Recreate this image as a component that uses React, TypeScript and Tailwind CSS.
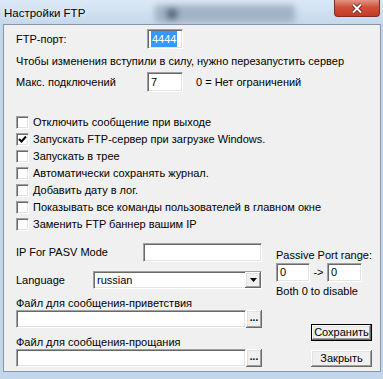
import React from "react"

const font = "font-['Tahoma','Liberation_Sans','DejaVu_Sans',sans-serif]"
const sunken =
  "bg-white border border-t-[#a0a0a0] border-l-[#a0a0a0] border-b-[#ffffff] border-r-[#ffffff] shadow-[inset_1px_1px_0_#696969,inset_-1px_-1px_0_#e3e3e3]"
const raised =
  "bg-[#f0f0f0] shadow-[inset_-1px_-1px_0_#696969,inset_1px_1px_0_#ffffff,inset_-2px_-2px_0_#a0a0a0,inset_2px_2px_0_#e3e3e3]"

function TextBox({ className, children }: { className: string; children?: React.ReactNode }) {
  return <div className={`${sunken} ${className} flex items-center pl-[3px] text-[11px]`}>{children}</div>
}

function Check({ checked, label }: { checked?: boolean; label: string }) {
  return (
    <div className="h-[17px] flex items-center">
      <div className={`${sunken} w-[13px] h-[13px] flex items-center justify-center`}>
        {checked && (
          <svg width="9" height="9" viewBox="0 0 9 9">
            <path d="M1 4 L3.5 6.5 L8 1.5" stroke="#000" strokeWidth="2" fill="none" />
          </svg>
        )}
      </div>
      <span className="ml-[4px] text-[11px]">{label}</span>
    </div>
  )
}

function DotsButton() {
  return (
    <div className={`${raised} w-[16px] h-[18px] flex items-center justify-center text-[10px] font-bold leading-none pb-[3px]`}>
      ...
    </div>
  )
}

export default function App() {
  return (
    <div className={`w-[383px] h-[379px] bg-[#c3d6eb] flex flex-col text-black ${font}`}>
      {/* title bar */}
      <div className="h-[24px] flex items-start bg-[linear-gradient(180deg,#dce8f5,#c6d8ec)] overflow-hidden">
        <span className="pl-[4px] pt-[5px] text-[11.5px] text-black [text-shadow:0_0_6px_#ffffff] font-['Liberation_Sans',sans-serif]">
          Настройки FTP
        </span>
        <div className="flex-1 flex pt-[5px] pl-[70px]">
          <div className="w-[140px] h-[18px] rounded-[3px] bg-[#a3b3c6] blur-[3px] flex items-center pl-[12px]">
            <div className="w-[10px] h-[10px] bg-[#56667a]" />
          </div>
        </div>
        <div className="w-[46px] h-[17px] mr-[3px] rounded-b-[4px] border border-t-0 border-[#7d2e24] bg-[linear-gradient(180deg,#e39484,#d0503a_45%,#c43a22)] flex items-center justify-center">
          <svg width="12" height="11" viewBox="0 0 12 11">
            <path d="M2 1.5 L10 9.5 M10 1.5 L2 9.5" stroke="#5a1a12" strokeWidth="3.6" />
            <path d="M2 1.5 L10 9.5 M10 1.5 L2 9.5" stroke="#ffffff" strokeWidth="2" />
          </svg>
        </div>
      </div>

      {/* client area */}
      <div className="ml-[3px] w-[378px] h-[348px] border border-[#8596ab] bg-[#f0f0f0] flex flex-col pl-[12px] text-[11px]">
        <div className="mt-[4px] h-[20px] flex items-center">
          <span className="w-[131px]">FTP-порт:</span>
          <TextBox className="w-[36px] h-[20px]">
            <span className="bg-[#3399ff] text-white px-px">4444</span>
          </TextBox>
        </div>
        <div className="mt-[4px] h-[16px] flex items-center">
          Чтобы изменения вступили в силу, нужно перезапустить сервер
        </div>
        <div className="mt-[3px] h-[20px] flex items-center">
          <span className="w-[131px]">Макс. подключений</span>
          <TextBox className="w-[36px] h-[20px]">7</TextBox>
          <span className="ml-[13px]">0 = Нет ограничений</span>
        </div>

        <div className="mt-[22px] flex flex-col">
          <Check label="Отключить сообщение при выходе" />
          <Check checked label="Запускать FTP-сервер при загрузке Windows." />
          <Check label="Запускать в трее" />
          <Check label="Автоматически сохранять журнал." />
          <Check label="Добавить дату в лог." />
          <Check label="Показывать все команды пользователей в главном окне" />
          <Check label="Заменить FTP баннер вашим IP" />
        </div>

        <div className="mt-[10px] flex">
          {/* left column */}
          <div className="w-[246px] flex flex-col">
            <div className="h-[19px] flex items-center justify-between">
              <span>IP For PASV Mode</span>
              <TextBox className="w-[119px] h-[19px]" />
            </div>
            <div className="mt-[9px] h-[18px] flex items-center">
              <span className="w-[77px]">Language</span>
              <div className={`${sunken} w-[169px] h-[18px] flex items-center`}>
                <span className="flex-1 pl-[3px]">russian</span>
                <div className={`${raised} w-[16px] h-[16px] flex items-center justify-center`}>
                  <svg width="7" height="4" viewBox="0 0 7 4">
                    <path d="M0 0 H7 L3.5 4 Z" fill="#000" />
                  </svg>
                </div>
              </div>
            </div>
            <div className="mt-[7px] h-[14px] flex items-center">Файл для сообщения-приветствия</div>
            <div className="h-[18px] flex">
              <TextBox className="w-[230px] h-[18px]" />
              <DotsButton />
            </div>
            <div className="mt-[7px] h-[14px] flex items-center">Файл для сообщения-прощания</div>
            <div className="h-[18px] flex">
              <TextBox className="w-[230px] h-[18px]" />
              <DotsButton />
            </div>
          </div>

          {/* right column */}
          <div className="ml-[14px] w-[97px] flex flex-col">
            <div className="mt-[5px] h-[15px] flex items-center">Passive Port range:</div>
            <div className="h-[19px] flex items-center">
              <TextBox className="w-[34px] h-[19px]">0</TextBox>
              <span className="w-[17px] text-center">-&gt;</span>
              <TextBox className="w-[35px] h-[19px]">0</TextBox>
            </div>
            <div className="mt-[2px] h-[15px] flex items-center">Both 0 to disable</div>
            <div className="mt-[25px] w-[61px] h-[17px] ml-[35px] border border-black flex">
              <div className={`${raised} flex-1 flex items-center justify-center`}>Сохранить</div>
            </div>
            <div className={`${raised} mt-[9px] ml-[35px] w-[61px] h-[17px] flex items-center justify-center`}>
              Закрыть
            </div>
          </div>
        </div>
      </div>
    </div>
  )
}
